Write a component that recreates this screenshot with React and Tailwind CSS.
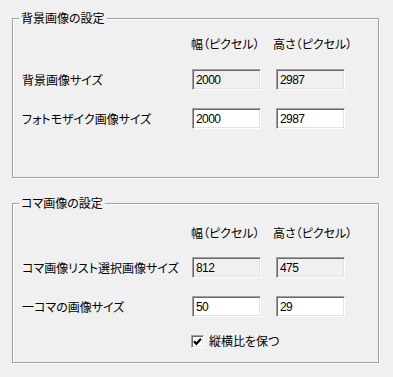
const font = "font-['Noto_Sans_CJK_JP','Noto_Sans_CJK_SC',sans-serif] [font-feature-settings:'palt']";

const GroupBox = ({ title, className = "", children }) => (
  <div
    className={`relative h-[160px] w-[367px] border border-[#a0a0a0] shadow-[1px_1px_0_#fff,inset_1px_1px_0_#fff] ${className}`}
  >
    <span className="absolute -top-[9px] left-[6px] bg-[#f0f0f0] px-[2px] text-[12px] leading-[16px] text-black">
      {title}
    </span>
    {children}
  </div>
);

const Field = ({ value, readOnly }) => (
  <div
    className={`flex h-[21px] w-[69px] items-center border border-t-[#a0a0a0] border-l-[#a0a0a0] border-r-white border-b-white pl-[3px] shadow-[inset_1px_1px_0_#696969,inset_-1px_-1px_0_#e3e3e3] ${
      readOnly ? "bg-[#f0f0f0]" : "bg-white"
    }`}
  >
    <span className="font-['Liberation_Sans',sans-serif] text-[12px] leading-none tracking-[-0.6px] text-black">
      {value}
    </span>
  </div>
);

const Header = () => (
  <div className="grid grid-cols-[155px_69px_69px] gap-x-[15px] text-[12px] leading-[16px]">
    <div />
    <div className="-ml-[1px] whitespace-nowrap">幅（ピクセル）</div>
    <div className="-ml-[3px] whitespace-nowrap">高さ（ピクセル）</div>
  </div>
);

const Row = ({ label, w, h, readOnly, className = "" }) => (
  <div
    className={`grid grid-cols-[155px_69px_69px] items-center gap-x-[15px] text-[12px] leading-[16px] ${className}`}
  >
    <div className="whitespace-nowrap">{label}</div>
    <Field value={w} readOnly={readOnly} />
    <Field value={h} readOnly={readOnly} />
  </div>
);

export default function App() {
  return (
    <div className={`h-[377px] w-[393px] overflow-hidden bg-[#f0f0f0] pl-[12px] pt-[18px] text-black ${font}`}>
      <GroupBox title="背景画像の設定">
        <div className="pl-[9px] pt-[17px]">
          <Header />
          <Row className="mt-[17px]" label="背景画像サイズ" w="2000" h="2987" readOnly />
          <Row className="mt-[18px]" label="フォトモザイク画像サイズ" w="2000" h="2987" />
        </div>
      </GroupBox>

      <GroupBox title="コマ画像の設定" className="mt-[25px]">
        <div className="pl-[9px] pt-[21px]">
          <Header />
          <Row className="mt-[16px]" label="コマ画像リスト選択画像サイズ" w="812" h="475" readOnly />
          <Row className="mt-[18px]" label="一コマの画像サイズ" w="50" h="29" />
          <div className="mt-[16px] grid grid-cols-[155px_auto] gap-x-[15px]">
            <div />
            <label className="-ml-[1px] flex items-center gap-[5px] text-[12px] leading-[16px]">
              <span className="flex h-[13px] w-[13px] items-center justify-center border border-t-[#a0a0a0] border-l-[#a0a0a0] border-r-white border-b-white bg-white shadow-[inset_1px_1px_0_#696969,inset_-1px_-1px_0_#e3e3e3]">
                <svg width="9" height="9" viewBox="0 0 9 9">
                  <path d="M1 4.2 L3.4 6.8 L8 1.8" fill="none" stroke="#000" strokeWidth="2.2" />
                </svg>
              </span>
              縦横比を保つ
            </label>
          </div>
        </div>
      </GroupBox>
    </div>
  );
}
